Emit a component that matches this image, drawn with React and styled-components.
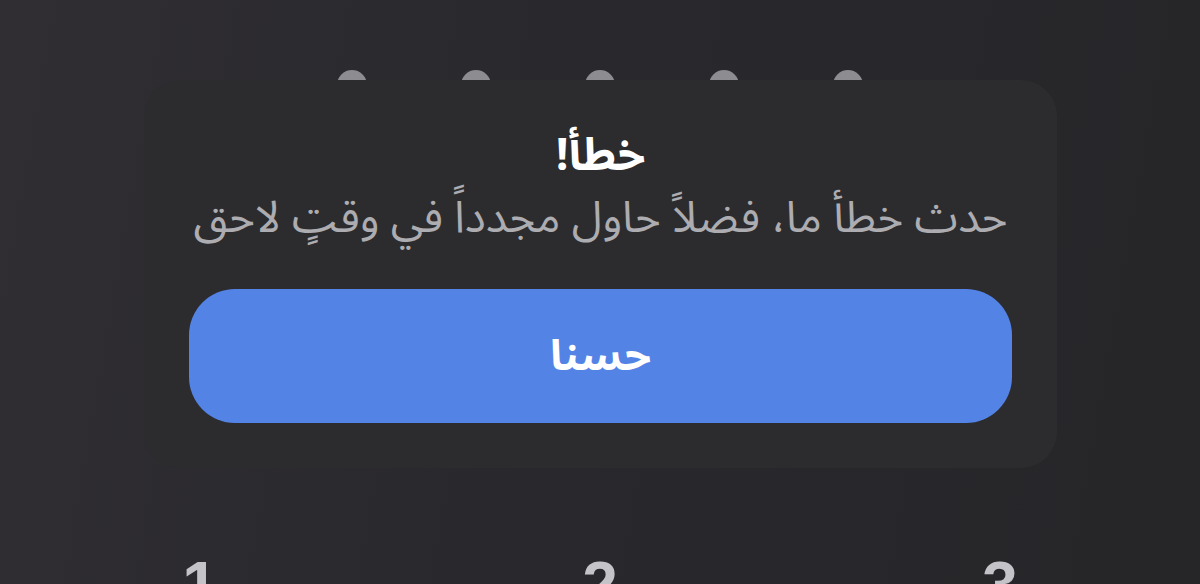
import React from 'react';
import styled, { createGlobalStyle } from 'styled-components';

const GlobalStyle = createGlobalStyle`
  html, body {
    margin: 0;
    padding: 0;
    background: #29282c;
  }
  * { box-sizing: border-box; }
`;

const Screen = styled.div`
  position: relative;
  width: 1200px;
  height: 584px;
  overflow: hidden;
  background: linear-gradient(100deg, #302e33 0%, #29282c 45%, #262528 100%);
  font-family: "Noto Sans Arabic", "DejaVu Sans", "Noto Sans", sans-serif;
`;

const Dots = styled.div`
  display: flex;
  justify-content: center;
  gap: 94px;
  padding-top: 70px;
`;

const Dot = styled.span`
  width: 30px;
  height: 30px;
  border-radius: 50%;
  background: #8d8c91;
`;

const Keypad = styled.div`
  display: grid;
  grid-template-columns: repeat(3, 400px);
  margin-top: 453px;
`;

const Key = styled.div`
  text-align: center;
  font-family: "Liberation Sans", sans-serif;
  font-size: 64px;
  font-weight: 700;
  line-height: 1;
  color: #c4c4c8;
`;

const Alert = styled.div`
  position: absolute;
  left: 144px;
  top: 80px;
  width: 913px;
  height: 388px;
  border-radius: 36px;
  background: #2c2c2e;
  display: flex;
  flex-direction: column;
  align-items: center;
  padding: 48px 45px 45px;
  direction: rtl;
`;

const Title = styled.h2`
  margin: 0;
  font-size: 45px;
  font-weight: 700;
  line-height: 56px;
  color: #ffffff;
`;

const Message = styled.p`
  margin: 4px 0 0;
  font-size: 44px;
  font-weight: 400;
  line-height: 60px;
  color: #adacb1;
  white-space: nowrap;
`;

const Button = styled.button`
  margin-top: auto;
  width: 100%;
  height: 134px;
  border: none;
  border-radius: 46px;
  background: #5483e6;
  color: #ffffff;
  font-family: inherit;
  font-size: 43px;
  font-weight: 700;
`;

export default function App() {
  return (
    <Screen>
      <GlobalStyle />
      <Dots>
        {[0, 1, 2, 3, 4].map((i) => <Dot key={i} />)}
      </Dots>
      <Keypad>
        {['1', '2', '3'].map((n) => <Key key={n}>{n}</Key>)}
      </Keypad>
      <Alert>
        <Title>خطأ!</Title>
        <Message>حدث خطأ ما، فضلاً حاول مجدداً في وقتٍ لاحق</Message>
        <Button>حسنا</Button>
      </Alert>
    </Screen>
  );
}
